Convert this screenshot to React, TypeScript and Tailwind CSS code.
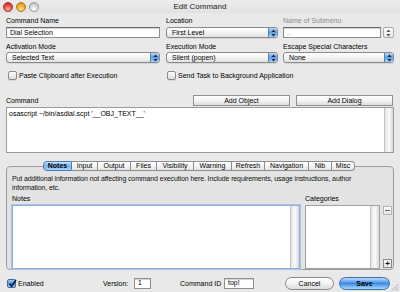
import React from 'react';

function Arrows({ dark = false }: { dark?: boolean }) {
  const c = dark ? '#1b2a44' : '#555';
  return (
    <svg width="5" height="8" viewBox="0 0 5 8">
      <path d="M2.5 0.5 L4.6 3 L0.4 3 Z" fill={c} />
      <path d="M2.5 7.5 L4.6 5 L0.4 5 Z" fill={c} />
    </svg>
  );
}

function Popup({ text, w }: { text: string; w: string }) {
  return (
    <div
      className={`${w} flex h-[11px] items-center overflow-hidden rounded-[3px] border border-[#8a8a8a] bg-linear-to-b from-white via-[#f3f3f3] to-[#e2e2e2] shadow-[0_1px_0_rgba(0,0,0,0.08)]`}
    >
      <span className="flex-1 truncate pl-[5px] leading-[9px] text-black">{text}</span>
      <div className="flex h-full w-[9px] items-center justify-center border-l border-[#5d7fae] bg-linear-to-b from-[#b8d9fa] via-[#5f9fe6] to-[#a9d4fb]">
        <Arrows dark />
      </div>
    </div>
  );
}

function TextField({ text, w, muted = false }: { text: string; w: string; muted?: boolean }) {
  return (
    <div
      className={`${w} flex h-[11px] items-center border border-[#8e8e8e] border-t-[#6a6a6a] bg-white pl-[3px] shadow-[inset_0_1px_1px_rgba(0,0,0,0.18)] ${muted ? 'text-[#9a9a9a]' : 'text-black'}`}
    >
      <span className="leading-[9px]">{text}</span>
    </div>
  );
}

function Checkbox({ checked = false }: { checked?: boolean }) {
  if (checked) {
    return (
      <div className="relative flex h-[9px] w-[9px] items-center justify-center rounded-[2px] border border-[#3f6aa3] bg-linear-to-b from-[#a9cffa] via-[#4a8fe0] to-[#9fd0fb]">
        <svg width="9" height="9" viewBox="0 0 9 9" className="absolute -top-[1px] left-[0px]">
          <path d="M1.5 4.8 L3.6 7.2 L8 1" stroke="#0d1730" strokeWidth="1.6" fill="none" />
        </svg>
      </div>
    );
  }
  return (
    <div className="h-[9px] w-[9px] rounded-[2px] border border-[#8a8a8a] bg-linear-to-b from-white to-[#dcdcdc] shadow-[0_1px_0_rgba(0,0,0,0.08)]" />
  );
}

function Scrollbar() {
  return (
    <div className="h-full w-[9px] border-l border-[#c4c4c4] bg-linear-to-r from-[#e4e4e4] via-[#fbfbfb] to-[#d8d8d8]" />
  );
}

const tabs: { name: string; w: string }[] = [
  { name: 'Notes', w: 'w-[29px]' },
  { name: 'Input', w: 'w-[26px]' },
  { name: 'Output', w: 'w-[33px]' },
  { name: 'Files', w: 'w-[26px]' },
  { name: 'Visibility', w: 'w-[37px]' },
  { name: 'Warning', w: 'w-[38px]' },
  { name: 'Refresh', w: 'w-[33px]' },
  { name: 'Navigation', w: 'w-[44px]' },
  { name: 'Nib', w: 'w-[23px]' },
  { name: 'Misc', w: 'w-[23px]' },
];

export default function App() {
  return (
    <div className="relative flex h-[292px] w-[400px] flex-col overflow-hidden bg-[#e9e9e9] font-['Liberation_Sans',Arial,sans-serif] text-[7px] text-black">
      {/* title bar */}
      <div className="grid h-[13px] grid-cols-[1fr_auto_1fr] items-center bg-linear-to-b from-[#ececec] to-[#e2e2e2]">
        <div className="flex items-center gap-[3px] pl-[3px]">
          <div className="h-[10px] w-[10px] rounded-full border border-[#a8302a] bg-[radial-gradient(circle_at_50%_75%,#ffb0a0,#e8463a_55%,#b3271f)]" />
          <div className="h-[10px] w-[10px] rounded-full border border-[#b07a1a] bg-[radial-gradient(circle_at_50%_75%,#ffe39a,#f2a928_55%,#c97d10)]" />
          <div className="h-[10px] w-[10px] rounded-full border border-[#9a9a9a] bg-[radial-gradient(circle_at_50%_75%,#ffffff,#d6d6d6_55%,#a9a9a9)]" />
        </div>
        <div className="text-[8px] leading-[10px] text-[#1a1a1a]">Edit Command</div>
        <div />
      </div>

      {/* row 1 labels */}
      <div className="mt-[4px] flex h-[8px] items-center pl-[6px] leading-[8px]">
        <span className="w-[154px]">Command Name</span>
        <span className="ml-[6px] w-[112px]">Location</span>
        <span className="ml-[5px] w-[111px] text-[#8c8c8c]">Name of Submenu</span>
      </div>
      <div className="mt-[2px] flex h-[11px] items-center pl-[6px]">
        <TextField text="Dial Selection" w="w-[154px]" />
        <div className="ml-[6px]">
          <Popup text="First Level" w="w-[112px]" />
        </div>
        <div className="ml-[5px] flex items-center gap-[2px]">
          <TextField text=".." w="w-[98px]" muted />
          <div className="flex h-[11px] w-[11px] items-center justify-center rounded-[2px] border border-[#a9a9a9] bg-linear-to-b from-white to-[#e8e8e8]">
            <Arrows />
          </div>
        </div>
      </div>

      {/* row 2 */}
      <div className="mt-[5px] flex h-[8px] items-center pl-[6px] leading-[8px]">
        <span className="w-[154px]">Activation Mode</span>
        <span className="ml-[6px] w-[112px]">Execution Mode</span>
        <span className="ml-[5px] w-[111px]">Escape Special Characters</span>
      </div>
      <div className="mt-[1px] flex h-[11px] items-center pl-[6px]">
        <Popup text="Selected Text" w="w-[154px]" />
        <div className="ml-[6px]">
          <Popup text="Silent (popen)" w="w-[112px]" />
        </div>
        <div className="ml-[5px]">
          <Popup text="None" w="w-[111px]" />
        </div>
      </div>

      {/* checkboxes */}
      <div className="mt-[8px] flex h-[9px] items-center pl-[8px]">
        <div className="flex w-[159px] items-center gap-[2px]">
          <Checkbox />
          <span className="leading-[8px]">Paste Clipboard after Execution</span>
        </div>
        <div className="flex items-center gap-[2px]">
          <Checkbox />
          <span className="leading-[8px]">Send Task to Background Application</span>
        </div>
      </div>

      {/* command */}
      <div className="mt-[15px] flex h-[11px] items-end pl-[6px] pr-[7px]">
        <span className="flex-1 pb-[1px] leading-[8px]">Command</span>
        <div className="flex gap-[6px]">
          <button className="h-[11px] w-[97px] border border-[#8f8f8f] bg-linear-to-b from-white via-[#f4f4f4] to-[#dedede] text-[7px] leading-[9px] font-['Liberation_Sans',Arial,sans-serif]">
            Add Object
          </button>
          <button className="h-[11px] w-[97px] border border-[#8f8f8f] bg-linear-to-b from-white via-[#f4f4f4] to-[#dedede] text-[7px] leading-[9px] font-['Liberation_Sans',Arial,sans-serif]">
            Add Dialog
          </button>
        </div>
      </div>
      <div className="mx-[6px] mt-[1px] flex h-[46px] border border-[#9a9a9a] bg-white">
        <div className="flex-1 pl-[2px] pt-[2px] leading-[8px]">osascript ~/bin/asdial.scpt '__OBJ_TEXT__'</div>
        <Scrollbar />
      </div>

      {/* tab view */}
      <div className="mx-[6px] mt-[8px] flex flex-col">
        <div className="relative z-10 flex h-[10px] justify-center pr-[2px]">
          {tabs.map((t, i) => {
            const first = i === 0;
            const last = i === tabs.length - 1;
            const sel = t.name === 'Notes';
            return (
              <div
                key={t.name}
                className={`${t.w} flex h-[10px] items-center justify-center border-y border-r leading-[8px] ${first ? 'rounded-l-[4px] border-l' : ''} ${last ? 'rounded-r-[4px]' : ''} ${
                  sel
                    ? 'border-[#4e78ae] bg-linear-to-b from-[#cfe6fd] via-[#72b0f0] to-[#a8d6fd] font-bold'
                    : 'border-[#8e8e8e] bg-linear-to-b from-white via-[#f5f5f5] to-[#e2e2e2]'
                }`}
              >
                {t.name}
              </div>
            );
          })}
        </div>
        <div className="-mt-[5px] flex h-[104px] flex-col rounded-[4px] border border-[#9c9c9c] bg-[#e3e3e3] pl-[5px] pr-[1px] pt-[8px]">
          <p className="whitespace-nowrap leading-[8.5px] tracking-[-0.12px] text-[#111]">
            Put additional information not affecting command execution here. Include requirements, usage instructions, author
            <br />
            information, etc.
          </p>
          <div className="mt-[2px] flex">
            <div className="flex w-[299px] flex-col">
              <span className="h-[9px] leading-[9px]">Notes</span>
              <div className="mt-[2px] flex h-[64px] w-[288px] border border-[#8bb0de] bg-white shadow-[0_0_0_1px_#a9c6ea]">
                <div className="flex-1" />
                <Scrollbar />
              </div>
            </div>
            <div className="flex flex-col">
              <span className="h-[9px] leading-[9px]">Categories</span>
              <div className="mt-[2px] flex">
                <div className="flex h-[64px] w-[75px] border border-[#a0a0a0] bg-white">
                  <div className="flex-1" />
                  <Scrollbar />
                </div>
                <div className="ml-[3px] flex h-[64px] flex-col justify-between py-[1px]">
                  <div className="flex h-[9px] w-[9px] items-center justify-center border border-[#b5b5b5] bg-linear-to-b from-white to-[#e2e2e2]">
                    <div className="h-[1px] w-[5px] bg-[#666]" />
                  </div>
                  <div className="flex h-[9px] w-[9px] items-center justify-center border border-[#8a8a8a] bg-linear-to-b from-white to-[#e2e2e2] text-[8px] font-bold leading-[8px]">
                    +
                  </div>
                </div>
              </div>
            </div>
          </div>
        </div>
      </div>

      {/* bottom row */}
      <div className="mt-[7px] flex h-[13px] items-center pl-[7px]">
        <div className="flex w-[96px] items-center gap-[2px]">
          <Checkbox checked />
          <span className="leading-[8px]">Enabled</span>
        </div>
        <span className="w-[31px] leading-[8px]">Version:</span>
        <div className="flex h-[11px] w-[17px] items-center border border-[#8e8e8e] bg-white pl-[3px] shadow-[inset_0_1px_1px_rgba(0,0,0,0.18)]">
          1
        </div>
        <span className="ml-[29px] w-[44px] leading-[8px]">Command ID</span>
        <div className="flex h-[11px] w-[30px] items-center border border-[#8e8e8e] bg-white pl-[3px] shadow-[inset_0_1px_1px_rgba(0,0,0,0.18)]">
          top!
        </div>
        <button className="ml-[31px] flex h-[13px] w-[49px] items-center justify-center rounded-full border border-[#8a8a8a] bg-linear-to-b from-white via-[#f2f2f2] to-[#dcdcdc] text-[7px] font-['Liberation_Sans',Arial,sans-serif] leading-[8px]">
          Cancel
        </button>
        <button className="ml-[5px] flex h-[13px] w-[51px] items-center justify-center rounded-full border border-[#3d6ea9] bg-linear-to-b from-[#b8dcfd] via-[#3f8ae4] to-[#a6dcff] text-[7px] font-bold font-['Liberation_Sans',Arial,sans-serif] leading-[8px]">
          Save
        </button>
      </div>

      {/* resize grip */}
      <svg className="absolute bottom-[1px] right-[1px]" width="8" height="8" viewBox="0 0 8 8">
        <path d="M7.5 1 L1 7.5 M7.5 4 L4 7.5 M7.5 6.5 L6.5 7.5" stroke="#9a9a9a" strokeWidth="0.8" />
      </svg>
    </div>
  );
}
